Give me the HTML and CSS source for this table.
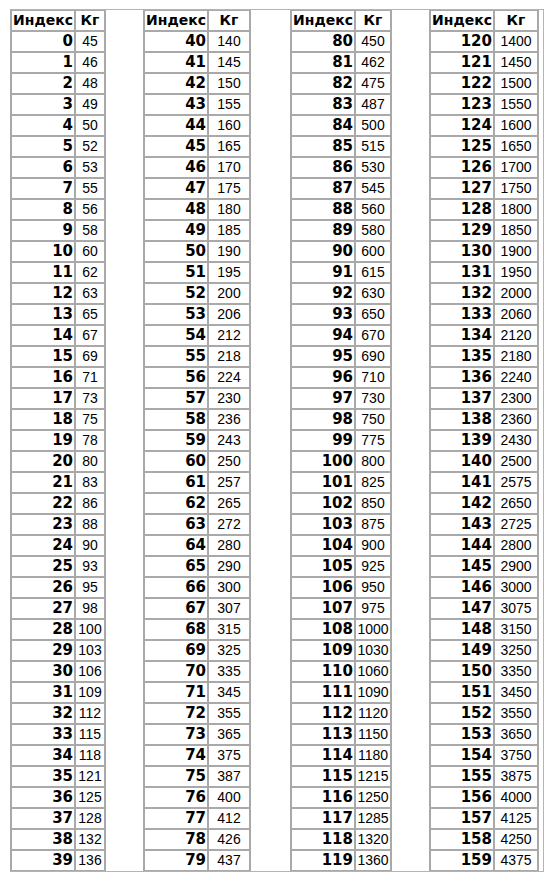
FILE: index.html
```html
<!DOCTYPE html>
<html lang="ru">
<head>
<meta charset="utf-8">
<title>Индекс нагрузки шин</title>
<link rel="stylesheet" href="styles.css">
</head>
<body>
<div class="sheet">
  <div class="block">
    <table class="load t1">
      <tr><th class="idx">Индекс</th><th class="kg">Кг</th></tr>
      <tr><td class="idx">0</td><td class="kg">45</td></tr>
      <tr><td class="idx">1</td><td class="kg">46</td></tr>
      <tr><td class="idx">2</td><td class="kg">48</td></tr>
      <tr><td class="idx">3</td><td class="kg">49</td></tr>
      <tr><td class="idx">4</td><td class="kg">50</td></tr>
      <tr><td class="idx">5</td><td class="kg">52</td></tr>
      <tr><td class="idx">6</td><td class="kg">53</td></tr>
      <tr><td class="idx">7</td><td class="kg">55</td></tr>
      <tr><td class="idx">8</td><td class="kg">56</td></tr>
      <tr><td class="idx">9</td><td class="kg">58</td></tr>
      <tr><td class="idx">10</td><td class="kg">60</td></tr>
      <tr><td class="idx">11</td><td class="kg">62</td></tr>
      <tr><td class="idx">12</td><td class="kg">63</td></tr>
      <tr><td class="idx">13</td><td class="kg">65</td></tr>
      <tr><td class="idx">14</td><td class="kg">67</td></tr>
      <tr><td class="idx">15</td><td class="kg">69</td></tr>
      <tr><td class="idx">16</td><td class="kg">71</td></tr>
      <tr><td class="idx">17</td><td class="kg">73</td></tr>
      <tr><td class="idx">18</td><td class="kg">75</td></tr>
      <tr><td class="idx">19</td><td class="kg">78</td></tr>
      <tr><td class="idx">20</td><td class="kg">80</td></tr>
      <tr><td class="idx">21</td><td class="kg">83</td></tr>
      <tr><td class="idx">22</td><td class="kg">86</td></tr>
      <tr><td class="idx">23</td><td class="kg">88</td></tr>
      <tr><td class="idx">24</td><td class="kg">90</td></tr>
      <tr><td class="idx">25</td><td class="kg">93</td></tr>
      <tr><td class="idx">26</td><td class="kg">95</td></tr>
      <tr><td class="idx">27</td><td class="kg">98</td></tr>
      <tr><td class="idx">28</td><td class="kg">100</td></tr>
      <tr><td class="idx">29</td><td class="kg">103</td></tr>
      <tr><td class="idx">30</td><td class="kg">106</td></tr>
      <tr><td class="idx">31</td><td class="kg">109</td></tr>
      <tr><td class="idx">32</td><td class="kg">112</td></tr>
      <tr><td class="idx">33</td><td class="kg">115</td></tr>
      <tr><td class="idx">34</td><td class="kg">118</td></tr>
      <tr><td class="idx">35</td><td class="kg">121</td></tr>
      <tr><td class="idx">36</td><td class="kg">125</td></tr>
      <tr><td class="idx">37</td><td class="kg">128</td></tr>
      <tr><td class="idx">38</td><td class="kg">132</td></tr>
      <tr><td class="idx">39</td><td class="kg">136</td></tr>
    </table>
  </div>
  <div class="block">
    <table class="load t2">
      <tr><th class="idx">Индекс</th><th class="kg">Кг</th></tr>
      <tr><td class="idx">40</td><td class="kg">140</td></tr>
      <tr><td class="idx">41</td><td class="kg">145</td></tr>
      <tr><td class="idx">42</td><td class="kg">150</td></tr>
      <tr><td class="idx">43</td><td class="kg">155</td></tr>
      <tr><td class="idx">44</td><td class="kg">160</td></tr>
      <tr><td class="idx">45</td><td class="kg">165</td></tr>
      <tr><td class="idx">46</td><td class="kg">170</td></tr>
      <tr><td class="idx">47</td><td class="kg">175</td></tr>
      <tr><td class="idx">48</td><td class="kg">180</td></tr>
      <tr><td class="idx">49</td><td class="kg">185</td></tr>
      <tr><td class="idx">50</td><td class="kg">190</td></tr>
      <tr><td class="idx">51</td><td class="kg">195</td></tr>
      <tr><td class="idx">52</td><td class="kg">200</td></tr>
      <tr><td class="idx">53</td><td class="kg">206</td></tr>
      <tr><td class="idx">54</td><td class="kg">212</td></tr>
      <tr><td class="idx">55</td><td class="kg">218</td></tr>
      <tr><td class="idx">56</td><td class="kg">224</td></tr>
      <tr><td class="idx">57</td><td class="kg">230</td></tr>
      <tr><td class="idx">58</td><td class="kg">236</td></tr>
      <tr><td class="idx">59</td><td class="kg">243</td></tr>
      <tr><td class="idx">60</td><td class="kg">250</td></tr>
      <tr><td class="idx">61</td><td class="kg">257</td></tr>
      <tr><td class="idx">62</td><td class="kg">265</td></tr>
      <tr><td class="idx">63</td><td class="kg">272</td></tr>
      <tr><td class="idx">64</td><td class="kg">280</td></tr>
      <tr><td class="idx">65</td><td class="kg">290</td></tr>
      <tr><td class="idx">66</td><td class="kg">300</td></tr>
      <tr><td class="idx">67</td><td class="kg">307</td></tr>
      <tr><td class="idx">68</td><td class="kg">315</td></tr>
      <tr><td class="idx">69</td><td class="kg">325</td></tr>
      <tr><td class="idx">70</td><td class="kg">335</td></tr>
      <tr><td class="idx">71</td><td class="kg">345</td></tr>
      <tr><td class="idx">72</td><td class="kg">355</td></tr>
      <tr><td class="idx">73</td><td class="kg">365</td></tr>
      <tr><td class="idx">74</td><td class="kg">375</td></tr>
      <tr><td class="idx">75</td><td class="kg">387</td></tr>
      <tr><td class="idx">76</td><td class="kg">400</td></tr>
      <tr><td class="idx">77</td><td class="kg">412</td></tr>
      <tr><td class="idx">78</td><td class="kg">426</td></tr>
      <tr><td class="idx">79</td><td class="kg">437</td></tr>
    </table>
  </div>
  <div class="block">
    <table class="load t3">
      <tr><th class="idx">Индекс</th><th class="kg">Кг</th></tr>
      <tr><td class="idx">80</td><td class="kg">450</td></tr>
      <tr><td class="idx">81</td><td class="kg">462</td></tr>
      <tr><td class="idx">82</td><td class="kg">475</td></tr>
      <tr><td class="idx">83</td><td class="kg">487</td></tr>
      <tr><td class="idx">84</td><td class="kg">500</td></tr>
      <tr><td class="idx">85</td><td class="kg">515</td></tr>
      <tr><td class="idx">86</td><td class="kg">530</td></tr>
      <tr><td class="idx">87</td><td class="kg">545</td></tr>
      <tr><td class="idx">88</td><td class="kg">560</td></tr>
      <tr><td class="idx">89</td><td class="kg">580</td></tr>
      <tr><td class="idx">90</td><td class="kg">600</td></tr>
      <tr><td class="idx">91</td><td class="kg">615</td></tr>
      <tr><td class="idx">92</td><td class="kg">630</td></tr>
      <tr><td class="idx">93</td><td class="kg">650</td></tr>
      <tr><td class="idx">94</td><td class="kg">670</td></tr>
      <tr><td class="idx">95</td><td class="kg">690</td></tr>
      <tr><td class="idx">96</td><td class="kg">710</td></tr>
      <tr><td class="idx">97</td><td class="kg">730</td></tr>
      <tr><td class="idx">98</td><td class="kg">750</td></tr>
      <tr><td class="idx">99</td><td class="kg">775</td></tr>
      <tr><td class="idx">100</td><td class="kg">800</td></tr>
      <tr><td class="idx">101</td><td class="kg">825</td></tr>
      <tr><td class="idx">102</td><td class="kg">850</td></tr>
      <tr><td class="idx">103</td><td class="kg">875</td></tr>
      <tr><td class="idx">104</td><td class="kg">900</td></tr>
      <tr><td class="idx">105</td><td class="kg">925</td></tr>
      <tr><td class="idx">106</td><td class="kg">950</td></tr>
      <tr><td class="idx">107</td><td class="kg">975</td></tr>
      <tr><td class="idx">108</td><td class="kg">1000</td></tr>
      <tr><td class="idx">109</td><td class="kg">1030</td></tr>
      <tr><td class="idx">110</td><td class="kg">1060</td></tr>
      <tr><td class="idx">111</td><td class="kg">1090</td></tr>
      <tr><td class="idx">112</td><td class="kg">1120</td></tr>
      <tr><td class="idx">113</td><td class="kg">1150</td></tr>
      <tr><td class="idx">114</td><td class="kg">1180</td></tr>
      <tr><td class="idx">115</td><td class="kg">1215</td></tr>
      <tr><td class="idx">116</td><td class="kg">1250</td></tr>
      <tr><td class="idx">117</td><td class="kg">1285</td></tr>
      <tr><td class="idx">118</td><td class="kg">1320</td></tr>
      <tr><td class="idx">119</td><td class="kg">1360</td></tr>
    </table>
  </div>
  <div class="block">
    <table class="load t4">
      <tr><th class="idx">Индекс</th><th class="kg">Кг</th></tr>
      <tr><td class="idx">120</td><td class="kg">1400</td></tr>
      <tr><td class="idx">121</td><td class="kg">1450</td></tr>
      <tr><td class="idx">122</td><td class="kg">1500</td></tr>
      <tr><td class="idx">123</td><td class="kg">1550</td></tr>
      <tr><td class="idx">124</td><td class="kg">1600</td></tr>
      <tr><td class="idx">125</td><td class="kg">1650</td></tr>
      <tr><td class="idx">126</td><td class="kg">1700</td></tr>
      <tr><td class="idx">127</td><td class="kg">1750</td></tr>
      <tr><td class="idx">128</td><td class="kg">1800</td></tr>
      <tr><td class="idx">129</td><td class="kg">1850</td></tr>
      <tr><td class="idx">130</td><td class="kg">1900</td></tr>
      <tr><td class="idx">131</td><td class="kg">1950</td></tr>
      <tr><td class="idx">132</td><td class="kg">2000</td></tr>
      <tr><td class="idx">133</td><td class="kg">2060</td></tr>
      <tr><td class="idx">134</td><td class="kg">2120</td></tr>
      <tr><td class="idx">135</td><td class="kg">2180</td></tr>
      <tr><td class="idx">136</td><td class="kg">2240</td></tr>
      <tr><td class="idx">137</td><td class="kg">2300</td></tr>
      <tr><td class="idx">138</td><td class="kg">2360</td></tr>
      <tr><td class="idx">139</td><td class="kg">2430</td></tr>
      <tr><td class="idx">140</td><td class="kg">2500</td></tr>
      <tr><td class="idx">141</td><td class="kg">2575</td></tr>
      <tr><td class="idx">142</td><td class="kg">2650</td></tr>
      <tr><td class="idx">143</td><td class="kg">2725</td></tr>
      <tr><td class="idx">144</td><td class="kg">2800</td></tr>
      <tr><td class="idx">145</td><td class="kg">2900</td></tr>
      <tr><td class="idx">146</td><td class="kg">3000</td></tr>
      <tr><td class="idx">147</td><td class="kg">3075</td></tr>
      <tr><td class="idx">148</td><td class="kg">3150</td></tr>
      <tr><td class="idx">149</td><td class="kg">3250</td></tr>
      <tr><td class="idx">150</td><td class="kg">3350</td></tr>
      <tr><td class="idx">151</td><td class="kg">3450</td></tr>
      <tr><td class="idx">152</td><td class="kg">3550</td></tr>
      <tr><td class="idx">153</td><td class="kg">3650</td></tr>
      <tr><td class="idx">154</td><td class="kg">3750</td></tr>
      <tr><td class="idx">155</td><td class="kg">3875</td></tr>
      <tr><td class="idx">156</td><td class="kg">4000</td></tr>
      <tr><td class="idx">157</td><td class="kg">4125</td></tr>
      <tr><td class="idx">158</td><td class="kg">4250</td></tr>
      <tr><td class="idx">159</td><td class="kg">4375</td></tr>
    </table>
  </div>
</div>
</body>
</html>
```

FILE: styles.css
```css
html, body {
  margin: 0;
  padding: 0;
  background: #ffffff;
}

.sheet {
  margin: 9px 0 0 10px;
  width: 533px;
  display: grid;
  grid-template-columns: 133px 147px 139px 1fr;
  border-top: 1px solid #b4b4b4;
  border-bottom: 1px solid #b4b4b4;
  border-right: 1px solid #b4b4b4;
}

.block {
  display: flex;
  align-items: flex-start;
}

.load {
  border-collapse: separate;
  border-spacing: 0;
  border-left: 1px solid #a9a9a9;
  border-right: 1px solid #a9a9a9;
  color: #000000;
}

.load th,
.load td {
  border: 1px solid #a9a9a9;
  height: 19px;
  line-height: 19px;
  padding: 0 1px;
  vertical-align: middle;
  white-space: nowrap;
  overflow: hidden;
}

.load th {
  font-family: "DejaVu Sans", Verdana, sans-serif;
  font-weight: bold;
  font-size: 14px;
  text-align: center;
}

.load td.idx {
  font-family: "DejaVu Sans", Verdana, sans-serif;
  font-weight: bold;
  font-size: 15px;
  text-align: right;
}

.load td.kg {
  font-family: "Liberation Sans", Arial, sans-serif;
  font-size: 14px;
  text-align: center;
}

.t1 th.idx, .t2 th.idx { width: 60px; }
.t3 th.idx, .t4 th.idx { width: 59px; }
.t1 th.kg { width: 26px; }
.t2 th.kg { width: 38px; }
.t3 th.kg { width: 32px; }
.t4 th.kg { width: 40px; }
```
